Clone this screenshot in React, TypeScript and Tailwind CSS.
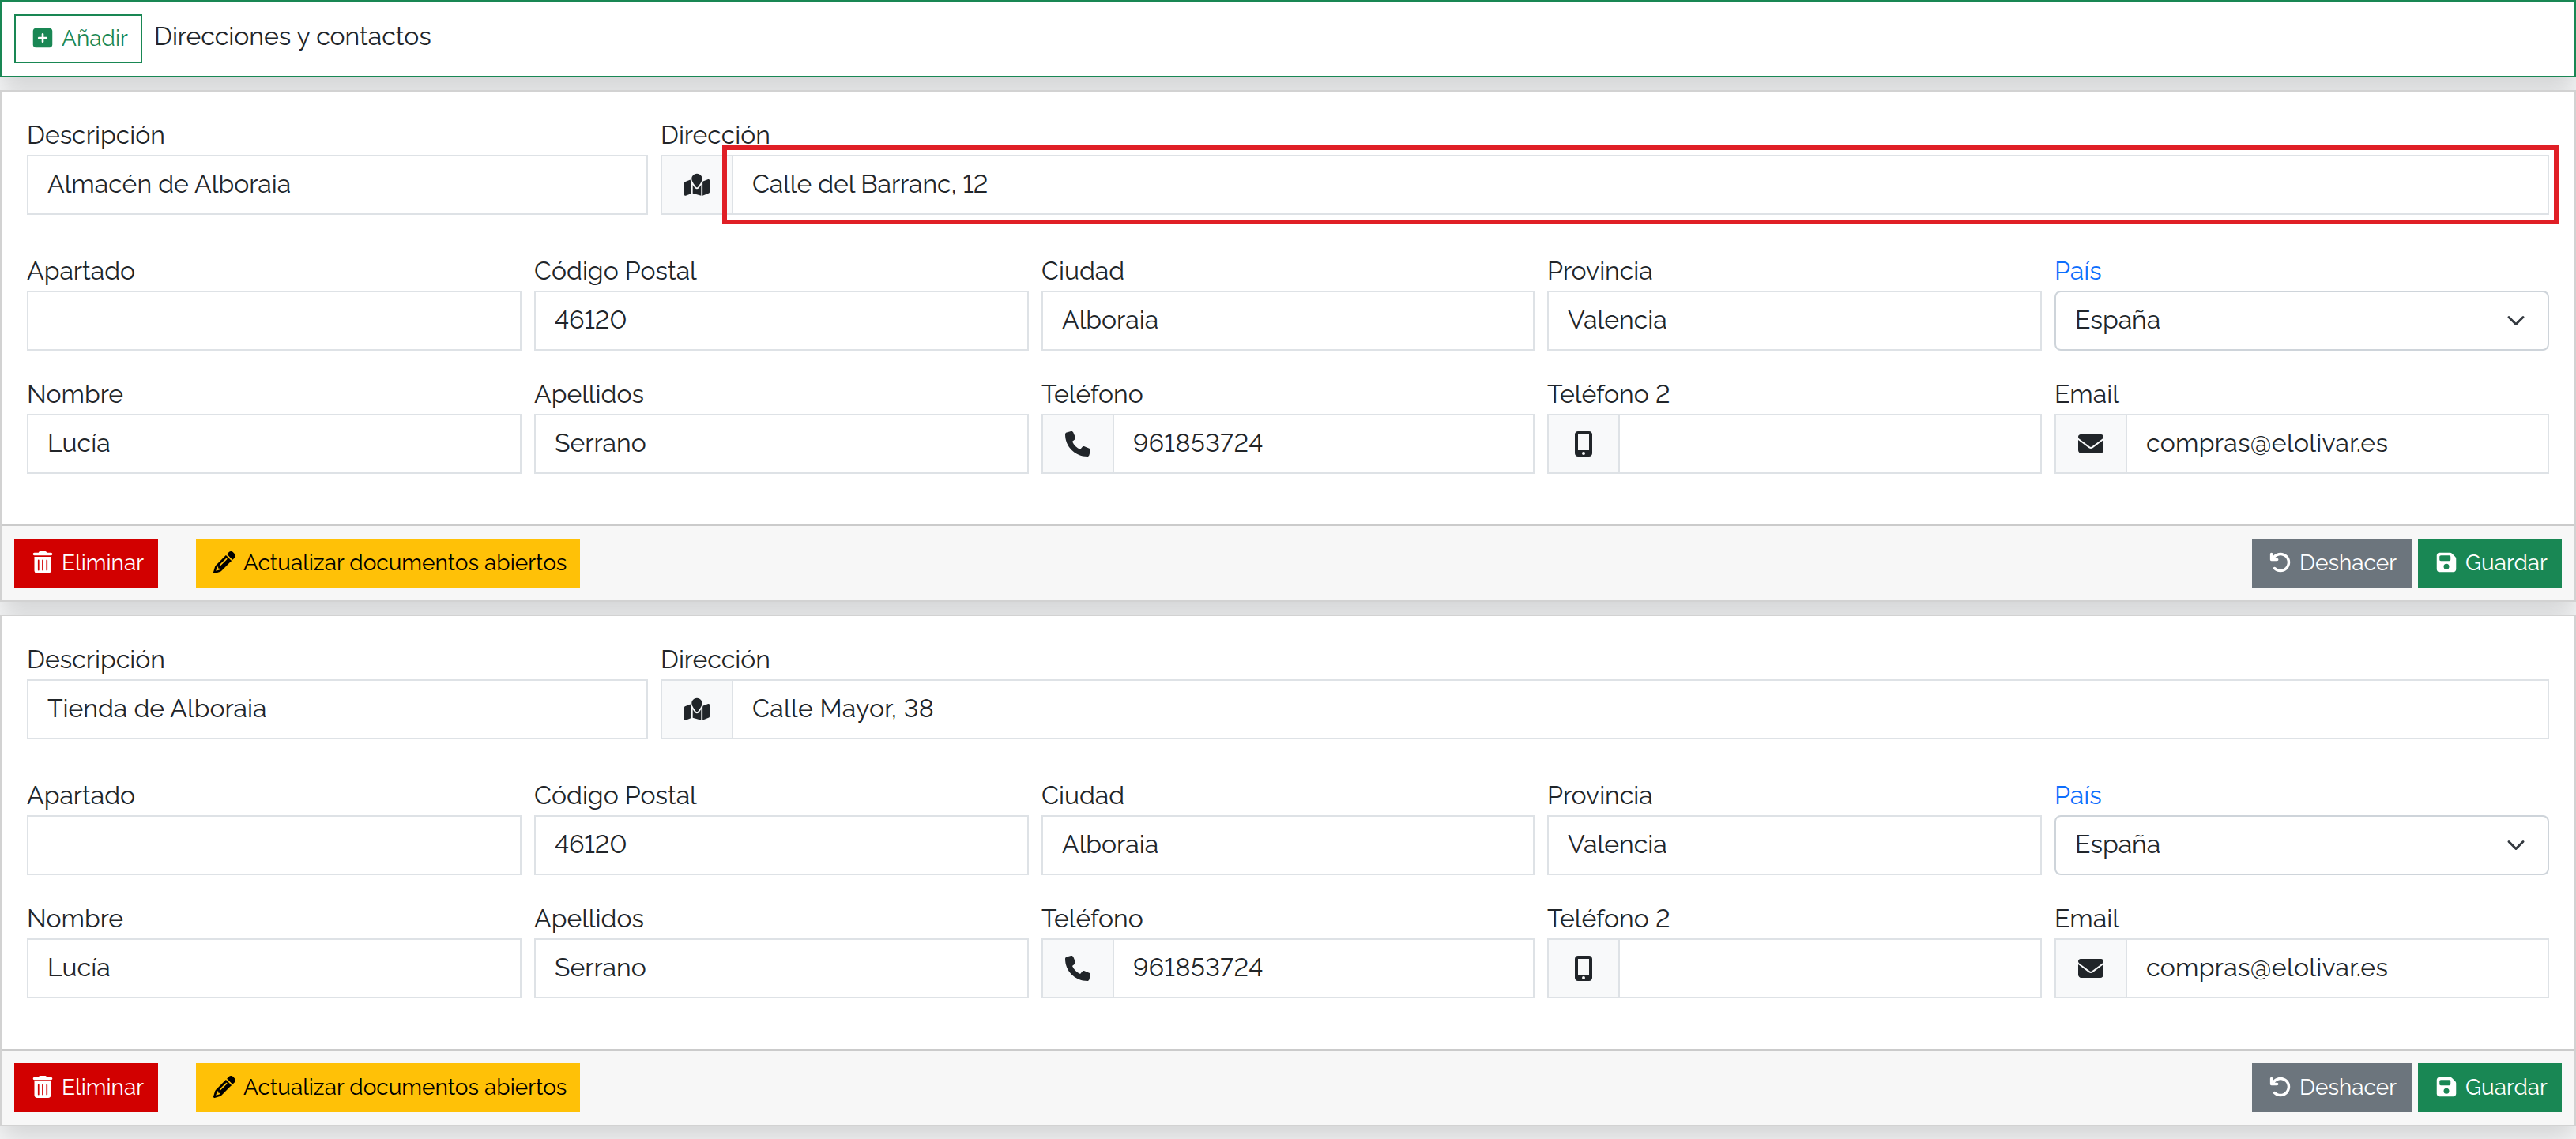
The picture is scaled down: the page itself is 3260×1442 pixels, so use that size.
import type { ReactNode } from "react";
import type { IconType } from "react-icons";
import clsx from "clsx";
import {
  FaArrowRotateLeft,
  FaEnvelope,
  FaFloppyDisk,
  FaMapLocation,
  FaMobileScreenButton,
  FaPencil,
  FaPhone,
  FaSquarePlus,
  FaTrashCan,
} from "react-icons/fa6";

type Address = {
  id: number;
  description: string;
  address: string;
  addressClass?: string;
  highlighted?: boolean;
};

const addresses: Address[] = [
  {
    id: 1,
    description: "Almacén de Alboraia",
    address: "Calle del Barranc, 12",
    addressClass: "tracking-[-0.1px]",
    highlighted: true,
  },
  {
    id: 2,
    description: "Tienda de Alboraia",
    address: "Calle Mayor, 38",
    addressClass: "tracking-[0.3px]",
  },
];

function Field({
  label,
  value,
  valueClass,
  icon: Icon,
  highlighted,
  className,
}: {
  label: string;
  value?: string;
  valueClass?: string;
  icon?: IconType;
  highlighted?: boolean;
  className?: string;
}) {
  return (
    <div className={clsx("min-w-0", className)}>
      <label className="block h-[49px] whitespace-nowrap">{label}</label>
      <div className="flex h-[76px]">
        {Icon && (
          <span className="flex w-[92px] shrink-0 items-center justify-center border-2 border-[#dee2e6] bg-[#f8f9fa]">
            <Icon className="h-8 w-auto" />
          </span>
        )}
        <div
          className={clsx(
            "relative flex flex-1 items-center border-2 border-[#dee2e6] bg-white px-6 pb-[2px]",
            Icon && "-ml-[2px]"
          )}
        >
          <span className={clsx("whitespace-nowrap", valueClass)}>{value}</span>
          {highlighted && (
            <div className="absolute -inset-[14px] border-[6px] border-[#e01f26]" />
          )}
        </div>
      </div>
    </div>
  );
}

function CountrySelect() {
  return (
    <div className="min-w-0">
      <label className="block h-[49px] text-[#0d6efd]">País</label>
      <div className="flex h-[76px] items-center justify-between rounded-lg border-2 border-[#ced4da] bg-white pr-7 pl-6">
        <span className="pb-[2px]">España</span>
        <svg
          viewBox="0 0 16 16"
          className="size-6"
          fill="none"
          stroke="#343a40"
          strokeWidth="2"
          strokeLinecap="round"
          strokeLinejoin="round"
        >
          <path d="m2 5 6 6 6-6" />
        </svg>
      </div>
    </div>
  );
}

function Button({ icon: Icon, className, children }: { icon: IconType; className: string; children: ReactNode }) {
  return (
    <button
      type="button"
      className={clsx(
        "flex h-[62px] shrink-0 items-center border-2 pl-4 text-[28px] leading-[42px] whitespace-nowrap",
        className
      )}
    >
      <span className="mr-[7px] flex w-[35px] shrink-0 justify-center pb-[2px]">
        <Icon className="h-7 w-auto" />
      </span>
      {children}
    </button>
  );
}

function AddressCard({ item }: { item: Address }) {
  return (
    <section className="border-2 border-[#d2d2d2] bg-white shadow-[0_16px_32px_rgba(0,0,0,0.15)]">
      <div className="px-8 pt-[31px] pb-16">
        <div className="mb-[47px] grid grid-cols-12 gap-4">
          <Field className="col-span-3" label="Descripción" value={item.description} />
          <Field
            className="col-span-9"
            label="Dirección"
            value={item.address}
            valueClass={item.addressClass}
            icon={FaMapLocation}
            highlighted={item.highlighted}
          />
        </div>

        <div className="grid grid-cols-[626px_626px_624px_626px_626px] gap-x-4 gap-y-[31px]">
          <Field label="Apartado" />
          <Field label="Código Postal" value="46120" />
          <Field label="Ciudad" value="Alboraia" />
          <Field label="Provincia" value="Valencia" />
          <CountrySelect />

          <Field label="Nombre" value="Lucía" />
          <Field label="Apellidos" value="Serrano" />
          <Field label="Teléfono" value="961853724" valueClass="tracking-[0.5px]" icon={FaPhone} />
          <Field label="Teléfono 2" icon={FaMobileScreenButton} />
          <Field label="Email" value="compras@elolivar.es" valueClass="tracking-[0.3px]" icon={FaEnvelope} />
        </div>
      </div>

      <footer className="flex border-t-2 border-[#cbcbcb] bg-[#f7f7f7] p-4">
        <Button icon={FaTrashCan} className="w-[182px] border-[#d20000] bg-[#d20000] text-white">
          Eliminar
        </Button>
        <Button icon={FaPencil} className="ml-12 w-[486px] border-[#ffc107] bg-[#ffc107] text-black">
          Actualizar documentos abiertos
        </Button>
        <Button icon={FaArrowRotateLeft} className="ml-auto w-[202px] border-[#6c757d] bg-[#6c757d] text-white">
          Deshacer
        </Button>
        <Button icon={FaFloppyDisk} className="ml-2 w-[182px] border-[#198754] bg-[#198754] text-white">
          Guardar
        </Button>
      </footer>
    </section>
  );
}

export default function App() {
  return (
    <main className="flex h-screen flex-col gap-4 overflow-hidden bg-[#f8f9fa] font-['Raleway','Lato',sans-serif] text-[32px] leading-[48px] text-[#212529] lining-nums">
      <header className="flex h-[98px] shrink-0 items-start border-2 border-[#198754] bg-white p-4 shadow-[0_16px_32px_rgba(0,0,0,0.15)]">
        <Button icon={FaSquarePlus} className="w-[162px] border-[#198754] bg-white text-[#198754]">
          Añadir
        </Button>
        <h1 className="mt-[4px] ml-[15px]">Direcciones y contactos</h1>
      </header>

      {addresses.map((item) => (
        <AddressCard key={item.id} item={item} />
      ))}
    </main>
  );
}
